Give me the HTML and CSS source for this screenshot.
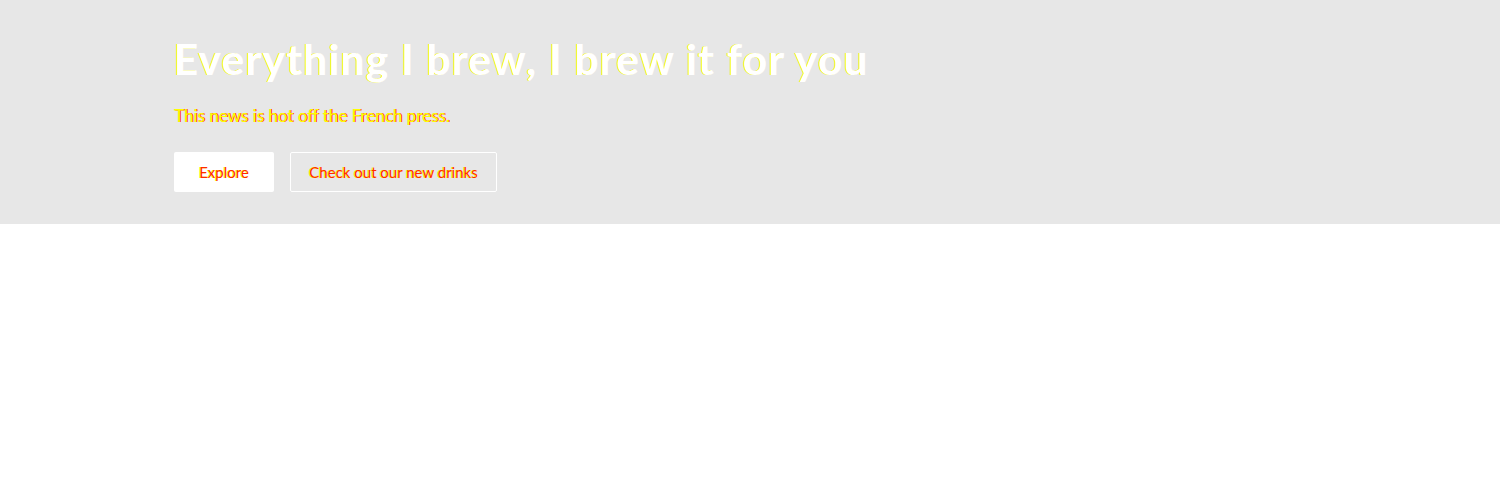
FILE: index.html
```html
<!DOCTYPE html>
<html>
<head>
<meta charset="utf-8">
<link rel="stylesheet" href="styles.css">
</head>
<body>
<section class="hero">
  <div class="hero-inner">
    <h1 class="title">Everything I brew, I brew it for you</h1>
    <p class="lead">This news is hot off the French press.</p>
    <div class="actions">
      <a class="btn btn-solid">Explore</a>
      <a class="btn btn-outline">Check out our new drinks</a>
    </div>
  </div>
</section>
</body>
</html>
```
FILE: styles.css
```css
html, body {
  margin: 0;
  padding: 0;
  background: #ffffff;
}
.hero {
  background: #e7e7e7;
  height: 224px;
  box-sizing: border-box;
  padding: 31px 0 0 174px;
  font-family: Lato, "Liberation Sans", sans-serif;
}
.title {
  margin: 0;
  font-size: 42px;
  font-weight: 700;
  line-height: 56px;
  letter-spacing: 1.45px;
  color: #ffffff;
  text-shadow: -1px 0 #ffff00;
}
.lead {
  margin: 17px 0 0 0;
  font-size: 17px;
  line-height: 24px;
  color: #ffff00;
  text-shadow: 1px 0 #ff2a00;
}
.actions {
  display: flex;
  gap: 16px;
  margin-top: 24px;
}
.btn {
  display: flex;
  align-items: center;
  justify-content: center;
  height: 40px;
  box-sizing: border-box;
  border-radius: 2px;
  font-size: 15px;
  color: #ff2a00;
  text-shadow: -1px 0 #ffff00;
}
.btn-solid {
  background: #ffffff;
  width: 100px;
}
.btn-outline {
  border: 1px solid #ffffff;
  width: 207px;
}
```
